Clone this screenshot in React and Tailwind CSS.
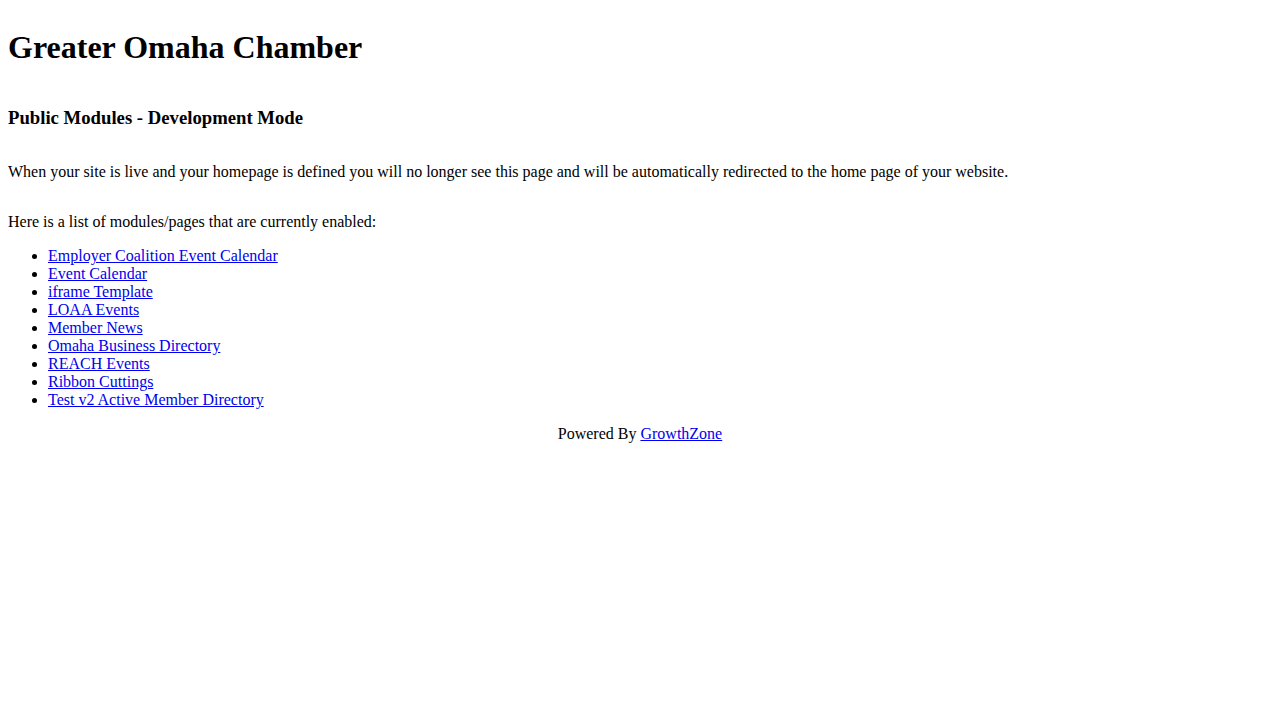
import React from 'react';

const modules = [
  'Employer Coalition Event Calendar',
  'Event Calendar',
  'iframe Template',
  'LOAA Events',
  'Member News',
  'Omaha Business Directory',
  'REACH Events',
  'Ribbon Cuttings',
  'Test v2 Active Member Directory',
];

const App = () => {
  return (
    <div className="min-h-[720px] bg-white p-2 text-black font-['Liberation_Serif',serif] text-[16px]">
      <h1 className="mt-[21px] text-[32px] leading-[37px] font-bold">Greater Omaha Chamber</h1>
      <h3 className="mt-[41px] text-[18.72px] leading-[22px] font-bold">Public Modules - Development Mode</h3>
      <p className="mt-[34px] leading-[18px]">
        When your site is live and your homepage is defined you will no longer see this page and will be automatically redirected to the home page of your website.
      </p>
      <p className="mt-[32px] leading-[18px]">Here is a list of modules/pages that are currently enabled:</p>
      <ul className="mt-4 list-disc pl-10">
        {modules.map((name) => (
          <li key={name} className="leading-[18px]">
            <a href="#" className="text-[#0000EE] underline">{name}</a>
          </li>
        ))}
      </ul>
      <div className="mt-4 text-center leading-[18px]">
        Powered By <a href="#" className="text-[#0000EE] underline">GrowthZone</a>
      </div>
    </div>
  );
};

export default App;
